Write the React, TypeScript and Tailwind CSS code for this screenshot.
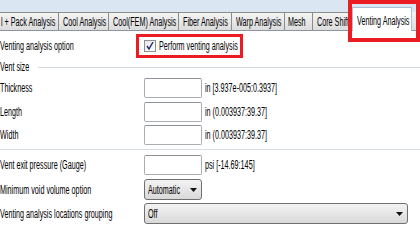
import type { ReactNode } from 'react'

// text in the reference is a narrow, squeezed sans; scale it down horizontally
function T({ children, className = '' }: { children: ReactNode; className?: string }) {
  return (
    <span className={`inline-block origin-left scale-x-[0.6] whitespace-nowrap leading-none ${className}`}>
      {children}
    </span>
  )
}

const tabs = [
  { label: 'l + Pack Analysis', w: 'w-[59px]', pad: 'pl-[1px]' },
  { label: 'Cool Analysis', w: 'w-[50px]', pad: 'pl-[4px]' },
  { label: 'Cool(FEM) Analysis', w: 'w-[70px]', pad: 'pl-[4px]' },
  { label: 'Fiber Analysis', w: 'w-[53px]', pad: 'pl-[4px]' },
  { label: 'Warp Analysis', w: 'w-[53px]', pad: 'pl-[4px]' },
  { label: 'Mesh', w: 'w-[28px]', pad: 'pl-[3px]' },
  { label: 'Core Shift', w: 'w-[39px]', pad: 'pl-[4px]' },
]

function Arrow() {
  return (
    <svg width="7" height="4" viewBox="0 0 7 4" className="shrink-0">
      <polygon points="0,0 7,0 3.5,4" fill="#111" />
    </svg>
  )
}

function Field() {
  return <div className="h-[20px] w-[58px] shrink-0 rounded-[2px] border border-[#abadb3] border-t-[#8e9399] bg-white" />
}

function Select({ value, w }: { value: string; w: string }) {
  return (
    <div
      className={`flex h-[21px] shrink-0 items-center rounded-[3px] border border-[#707070] bg-gradient-to-b from-[#f3f3f3] to-[#d9d9d9] pl-[3px] pr-[4px] ${w}`}
    >
      <div className="min-w-0 flex-1 overflow-hidden">
        <T>{value}</T>
      </div>
      <Arrow />
    </div>
  )
}

function Row({ label, children, className = '' }: { label: string; children: ReactNode; className?: string }) {
  return (
    <div className={`flex items-center ${className}`}>
      <div className="w-[144px] shrink-0">
        <T>{label}</T>
      </div>
      {children}
    </div>
  )
}

export default function App() {
  return (
    <div className="relative h-[240px] w-[420px] overflow-hidden bg-white text-[12px] text-black [font-family:'Liberation_Sans',Arial,sans-serif]">
      {/* tab strip */}
      <div className="flex h-[31px] items-end border-b border-[#8d96a0] bg-[#dbe6f3]">
        {tabs.map((t) => (
          <div
            key={t.label}
            className={`flex h-[18px] shrink-0 items-center border border-b-0 border-l-0 border-[#8c8c8c] bg-gradient-to-b from-[#f4f4f4] to-[#dcdcdc] ${t.w} ${t.pad}`}
          >
            <T className="pt-[1px]">{t.label}</T>
          </div>
        ))}
        <div className="relative z-10 -mb-[1px] flex h-[24px] w-[60px] shrink-0 items-start border border-b-0 border-[#a9c2da] bg-white pl-[4px] pt-[7px]">
          <T>Venting Analysis</T>
        </div>
        <div className="h-[18px] flex-1 bg-gradient-to-b from-[#f4f4f4] to-[#dcdcdc]" />
      </div>

      <div className="flex flex-col">
        {/* venting option */}
        <Row label="Venting analysis option" className="mt-[3px] h-[24px]">
          <div className="flex items-center gap-[3px]">
            <div className="flex h-[12px] w-[12px] items-center justify-center border border-[#8f8f8f] bg-gradient-to-br from-[#e6e6e6] to-white">
              <svg width="8" height="8" viewBox="0 0 8 8">
                <path d="M1 4 L3 7 L7 0" fill="none" stroke="#1f2f6e" strokeWidth="1.4" />
              </svg>
            </div>
            <T>Perform venting analysis</T>
          </div>
        </Row>

        {/* vent size group */}
        <div className="mt-[2px] flex h-[14px] items-center">
          <T>Vent size</T>
          <div className="ml-[-11px] h-px flex-1 bg-[#d5dce2]" />
        </div>
        <Row label="Thickness" className="mt-[4px]">
          <Field />
          <div className="pl-[3px]">
            <T>in [3.937e-005:0.3937]</T>
          </div>
        </Row>
        <Row label="Length" className="mt-[4px]">
          <Field />
          <div className="pl-[3px]">
            <T>in (0.003937:39.37]</T>
          </div>
        </Row>
        <Row label="Width" className="mt-[3px]">
          <Field />
          <div className="pl-[3px]">
            <T>in (0.003937:39.37]</T>
          </div>
        </Row>
        <div className="mt-[4px] h-px bg-[#d5dce2]" />

        <Row label="Vent exit pressure (Gauge)" className="mt-[5px]">
          <Field />
          <div className="pl-[3px]">
            <T>psi [-14.69:145]</T>
          </div>
        </Row>
        <Row label="Minimum void volume option" className="mt-[4px]">
          <Select value="Automatic" w="w-[58px]" />
        </Row>
        <Row label="Venting analysis locations grouping" className="mt-[3px]">
          <Select value="Off" w="w-[264px]" />
        </Row>
      </div>

      {/* red highlight boxes */}
      <div className="absolute left-[348px] top-0 h-[42px] w-[72px] border-4 border-[#ec1c24]" />
      <div className="absolute left-[136px] top-[34px] h-[24px] w-[107px] border-[3px] border-[#ec1c24]" />
    </div>
  )
}
